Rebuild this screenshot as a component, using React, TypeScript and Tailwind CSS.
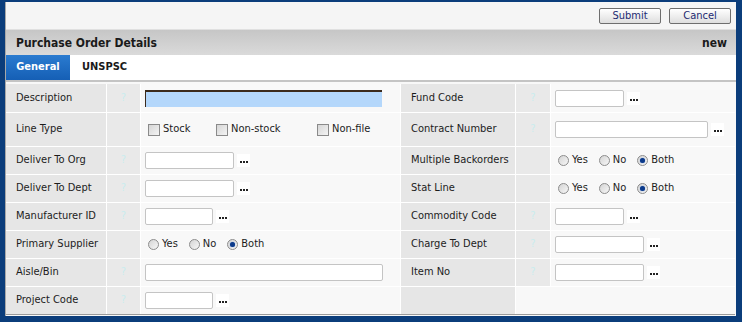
import React from 'react'

const font = { fontFamily: '"DejaVu Sans Condensed", "DejaVu Sans", Verdana, sans-serif' }

function Help({ show = true }: { show?: boolean }) {
  return (
    <div className="bg-[#e9e9e9] flex items-center justify-center text-[11px] text-[#c9ecee]">
      {show ? '?' : ''}
    </div>
  )
}

function Label({ text }: { text: string }) {
  return <div className="bg-[#e6e6e6] flex items-center pl-[10px] text-[11px] text-[#1c1c1c]">{text}</div>
}

// the "..." lookup button
function Dots() {
  return (
    <span className="ml-[3px] bg-white w-[13px] h-[13px] flex items-end justify-center gap-px pb-[4px]">
      <span className="w-[2px] h-[2px] bg-[#222]" />
      <span className="w-[2px] h-[2px] bg-[#222]" />
      <span className="w-[2px] h-[2px] bg-[#222]" />
    </span>
  )
}

function TextBox({ w, dots = true }: { w: string; dots?: boolean }) {
  return (
    <div className="flex items-center">
      <div className={`${w} h-[17px] bg-white border border-[#c4c4c4] rounded-[2px]`} />
      {dots && <Dots />}
    </div>
  )
}

function Check({ label, className = '' }: { label: string; className?: string }) {
  return (
    <span className={`flex items-center gap-[3px] ${className}`}>
      <span className="w-[12px] h-[12px] border border-[#8a8a8a] bg-gradient-to-br from-[#d6d6d6] to-[#f4f4f4]" />
      <span className="text-[11px] text-[#1c1c1c]">{label}</span>
    </span>
  )
}

function Radio({ label, on = false }: { label: string; on?: boolean }) {
  return (
    <span className="flex items-center gap-[3px]">
      <span className="w-[11px] h-[11px] rounded-full border border-[#8c8c8c] bg-gradient-to-br from-[#d4d4d4] to-[#f7f7f7] flex items-center justify-center">
        {on && <span className="w-[5px] h-[5px] rounded-full bg-[#0c3a8a] shadow-[0_0_1px_#4a7fd0]" />}
      </span>
      <span className="text-[11px] text-[#1c1c1c]">{label}</span>
    </span>
  )
}

function Field({ children }: { children?: React.ReactNode }) {
  return <div className="bg-[#f8f8f8] flex items-center pl-[4px]">{children}</div>
}

function Radios() {
  return (
    <div className="flex items-center gap-[11px] pl-[3px]">
      <Radio label="Yes" />
      <Radio label="No" />
      <Radio label="Both" on />
    </div>
  )
}

export default function App() {
  return (
    <div style={font} className="w-[742px] h-[322px] bg-[#0b3d7b] pt-[2px] pl-[5px] pr-[6px] pb-[6px]">
      <div className="h-full bg-[#f8f8f8] border-l border-[#a8a8a8] flex flex-col">
        {/* toolbar */}
        <div className="h-[27px] bg-[#f5f5f5] flex items-center justify-end gap-[8px] pr-[5px]">
          <button className="w-[62px] h-[16px] border border-[#6e6e6e] rounded-[2px] bg-gradient-to-b from-white to-[#dedede] text-[11px] leading-[14px] text-[#1d2a72]">Submit</button>
          <button className="w-[62px] h-[16px] border border-[#6e6e6e] rounded-[2px] bg-gradient-to-b from-white to-[#dedede] text-[11px] leading-[14px] text-[#1d2a72]">Cancel</button>
        </div>
        {/* header */}
        <div className="h-[26px] bg-gradient-to-b from-[#c6c6c6] to-[#dadada] flex items-center justify-between pl-[10px] pr-[9px] border-t border-[#e0e0e0]">
          <span className="text-[12px] font-bold text-[#1a1a1a]">Purchase Order Details</span>
          <span className="text-[12px] font-bold text-[#1a1a1a]">new</span>
        </div>
        {/* tabs */}
        <div className="h-[25px] bg-white flex items-stretch">
          <div className="w-[64px] bg-gradient-to-b from-[#2a7bd0] to-[#155fb5] flex items-center justify-center text-[11px] font-bold text-white">General</div>
          <div className="flex items-center pl-[12px] text-[11px] font-bold text-[#1a1a1a]">UNSPSC</div>
        </div>
        <div className="h-[4px] bg-[#f8f8f8] border-t-2 border-[#c4c4c4]" />
        {/* form */}
        <div className="grid grid-cols-[100px_33px_259px_114px_34px_184px] grid-rows-[28px_33px_27px_27px_27px_27px_27px_27px] gap-px bg-white w-[729px] border-b border-[#9a9a9a]">
          <Label text="Description" />
          <Help />
          <Field>
            <div className="w-[237px] h-[17px] bg-[#b4d7fb] border-t-2 border-l border-[#3b2a1c]" />
          </Field>
          <Label text="Fund Code" />
          <Help />
          <Field><TextBox w="w-[69px]" /></Field>

          <Label text="Line Type" />
          <Help show={false} />
          <Field>
            <div className="flex items-center pl-[3px]">
              <Check label="Stock" className="w-[68px]" />
              <Check label="Non-stock" className="w-[101px]" />
              <Check label="Non-file" />
            </div>
          </Field>
          <Label text="Contract Number" />
          <Help />
          <Field><TextBox w="w-[153px]" /></Field>

          <Label text="Deliver To Org" />
          <Help />
          <Field><TextBox w="w-[89px]" /></Field>
          <Label text="Multiple Backorders" />
          <Help show={false} />
          <Field><Radios /></Field>

          <Label text="Deliver To Dept" />
          <Help />
          <Field><TextBox w="w-[89px]" /></Field>
          <Label text="Stat Line" />
          <Help show={false} />
          <Field><Radios /></Field>

          <Label text="Manufacturer ID" />
          <Help />
          <Field><TextBox w="w-[68px]" /></Field>
          <Label text="Commodity Code" />
          <Help />
          <Field><TextBox w="w-[69px]" /></Field>

          <Label text="Primary Supplier" />
          <Help show={false} />
          <Field><Radios /></Field>
          <Label text="Charge To Dept" />
          <Help />
          <Field><TextBox w="w-[89px]" /></Field>

          <Label text="Aisle/Bin" />
          <Help />
          <Field><TextBox w="w-[238px]" dots={false} /></Field>
          <Label text="Item No" />
          <Help />
          <Field><TextBox w="w-[89px]" /></Field>

          <Label text="Project Code" />
          <Help />
          <Field><TextBox w="w-[68px]" /></Field>
          <Label text="" />
          <div className="col-span-2 bg-[#f8f8f8]" />
        </div>
      </div>
    </div>
  )
}
